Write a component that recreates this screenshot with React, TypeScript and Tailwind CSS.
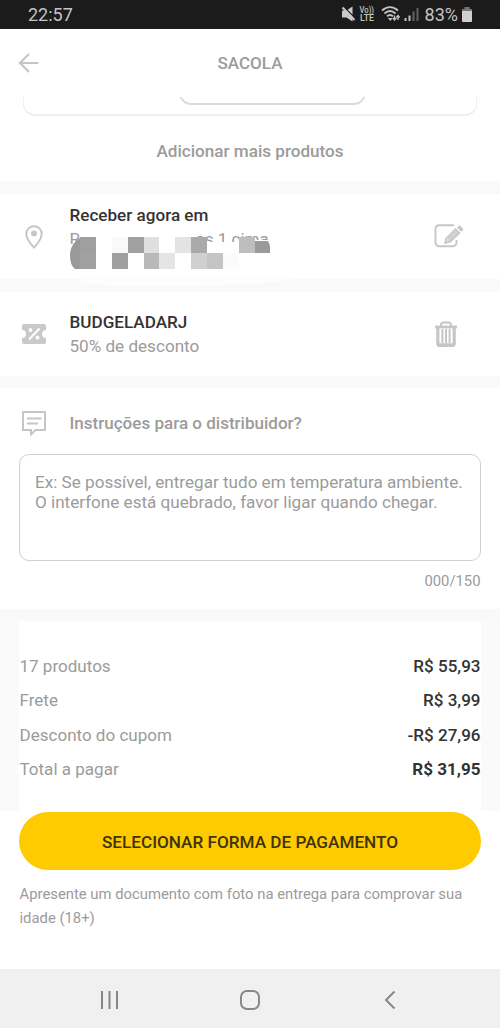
import type { ReactNode } from 'react';

const totals = [
  { label: '17 produtos', value: 'R$ 55,93' },
  { label: 'Frete', value: 'R$ 3,99' },
  { label: 'Desconto do cupom', value: '-R$ 27,96' },
  { label: 'Total a pagar', value: 'R$ 31,95', bold: true },
];

// x, y, width, fill
const mosaic: [number, number, number, string][] = [
  [10, 0, 16, '#9f9f9f'],
  [42, 0, 16, '#f9f9f9'],
  [58, 0, 16, '#a1a1a1'],
  [74, 0, 15, '#dfdfdf'],
  [105, 0, 16, '#e3e3e3'],
  [121, 0, 16, '#aaaaaa'],
  [169, 0, 16, '#bebebe'],
  [10, 16, 16, '#a1a1a1'],
  [42, 16, 16, '#a0a0a0'],
  [74, 16, 15, '#b9b9b9'],
  [89, 16, 16, '#e5e5e5'],
  [121, 16, 16, '#d0d0d0'],
  [137, 16, 16, '#c5c5c5'],
  [153, 16, 16, '#fbfbfb'],
];

const StatusBar = () => (
  <div className="flex h-[29px] shrink-0 items-center bg-[#1b1b1b] pl-7 pr-7 text-[#c4c4c4]">
    <span className="text-[18px] leading-[29px]">22:57</span>
    <svg className="ml-auto h-[29px] w-[82px] shrink-0" viewBox="0 0 82 29" fill="none">
      <path d="M2 10.500h4.500L12.500 6.500v15L6.500 17.500H2z" fill="#c9c9c9" />
      <path d="M3.500 6.500l12 12" stroke="#1b1b1b" strokeWidth="1.300" />
      <path d="M2.500 7.500l12 12.500" stroke="#c9c9c9" strokeWidth="2" />
      <text x="19.500" y="12.500" fontSize="8.500" fontWeight="500" fill="#c4c4c4" textLength="14.500" lengthAdjust="spacingAndGlyphs">Vo))</text>
      <text x="20" y="21" fontSize="9" fontWeight="500" fill="#c4c4c4" textLength="14" lengthAdjust="spacingAndGlyphs">LTE</text>
      <g stroke="#c4c4c4" strokeWidth="1.900">
        <path d="M42 10.500c5-4.500 11-4.500 16 0" />
        <path d="M44.500 13.500c3.500-3.200 7.500-3.200 11 0" />
        <path d="M47 16.300c2-1.700 4-1.700 6 0" />
      </g>
      <path d="M48 18h4.500l-2.200 3z" fill="#c4c4c4" />
      <path d="M54.500 15.500v4.500M52.800 18l1.700 2 1.700-2M58 20v-4.500M56.300 17.500l1.700-2 1.700 2" stroke="#c4c4c4" strokeWidth="1.300" />
      <path d="M65.500 18v3M69.500 15.500V21" stroke="#c4c4c4" strokeWidth="2" />
      <path d="M73.500 11.500V21M77.500 8v13" stroke="#626262" strokeWidth="2" />
    </svg>
    <span className="ml-[3px] text-[18px] leading-[29px]">83%</span>
    <svg className="ml-1 h-[15px] w-[10px] shrink-0" viewBox="0 0 10 15">
      <path d="M2.500 0h5v2H10v3H0V2h2.500z" fill="#777" />
      <path d="M0 4h10v10a1 1 0 0 1-1 1H1a1 1 0 0 1-1-1z" fill="#d0d0d0" />
    </svg>
  </div>
);

const Divider = ({ className = 'h-[12px]' }: { className?: string }) => (
  <div className={`shrink-0 bg-[#f9f9f9] ${className}`} />
);

const Row = ({ icon, action, children }: { icon: ReactNode; action: ReactNode; children: ReactNode }) => (
  <div className="flex h-full items-center pl-5 pr-[36px]">
    <div className="w-[49.500px] shrink-0">{icon}</div>
    <div className="flex-1">{children}</div>
    {action}
  </div>
);

// address line, mostly covered by the mosaic
const HiddenAddress = () => (
  <div className="relative h-[39px] w-[230px]">
    <p className="flex text-[17px] leading-6 text-[#9b9b9b]">
      <span className="w-[126px]">R</span>
      <span>as 1 cima</span>
    </p>
    <svg className="absolute left-0 top-[10px] h-[52px] w-[230px]" viewBox="0 0 230 52">
      <path d="M0 7h10V-1h117v3h10v3h32V3h35v30H0z" fill="#fff" />
      <path d="M11 40h219c-25 7-65 8-110 9-50 1-88 0-109-3z" fill="#fdfdfd" />
      <path d="M10 1C3 5 0 12 0 18c0 7 2 12 5 14h5z" fill="#999" />
      {mosaic.map(([x, y, w, fill]) => (
        <rect key={`${x}-${y}`} x={x} y={y} width={w} height="16" fill={fill} />
      ))}
      <path d="M185 4h13q2 3 2 6v6h-15z" fill="#9a9a9a" />
    </svg>
  </div>
);

const App = () => {
  return (
    <div className="flex h-[1028px] w-[500px] flex-col overflow-hidden bg-white font-['Roboto',sans-serif] text-[#9b9b9b]">
      <StatusBar />

      <header className="grid h-[68px] shrink-0 grid-cols-3 items-center px-[18px]">
        <svg className="h-5 w-[21px]" viewBox="0 0 21 20" fill="none" stroke="#c6c6c6" strokeWidth="2.200">
          <path d="M20.500 10H2M11 1l-9 9 9 9" />
        </svg>
        <h1 className="text-center text-[17px] font-medium leading-6">SACOLA</h1>
      </header>

      <div className="flex h-[84px] shrink-0 flex-col">
        <div className="mx-[23px] h-[19px] rounded-b-[12px] border-x-[1.500px] border-b-2 border-[#efefef] pl-[155px]">
          <div className="h-[8px] w-[187px] overflow-hidden">
            <div className="-mt-4 h-6 w-full rounded-b-[12px] border-2 border-[#dcdcdc]" />
          </div>
        </div>
        <p className="mt-[23px] text-center text-[17.100px] font-medium leading-6">Adicionar mais produtos</p>
      </div>

      <Divider className="h-[13px]" />
      <section className="h-[85px] shrink-0">
        <Row
          icon={
            <svg className="ml-[5px] h-6 w-[18px]" viewBox="0 0 18 24" fill="none">
              <path d="M9 1.200a7.600 7.600 0 0 0-7.700 7.600C1.300 14.500 9 22.500 9 22.500s7.700-8 7.700-13.700A7.600 7.600 0 0 0 9 1.200z" stroke="#c6c6c6" strokeWidth="2" />
              <circle cx="9" cy="8.500" r="3" fill="#c6c6c6" />
            </svg>
          }
          action={
            <svg className="-mt-[2px] h-6 w-[30px]" viewBox="0 0 30 24" fill="none" stroke="#c6c6c6" strokeWidth="1.900">
              <path d="M20 1.200H5a3.500 3.500 0 0 0-3.500 3.500v14A3.500 3.500 0 0 0 5 22.200h14a3.500 3.500 0 0 0 3.500-3.500V16" />
              <path d="M12 14.500L21.500 5l4 4-9.500 9-5 1z" fill="#dcdcdc" strokeWidth="1.500" />
              <path d="M14 15l8.500-8M15.500 16.500l8.500-8" stroke="#bdbdbd" strokeWidth="1" />
              <path d="M23 3.500l2.500-2.300 4 4-2.300 2.500z" fill="#c6c6c6" stroke="none" />
            </svg>
          }
        >
          <div className="-mt-[5px]">
            <p className="text-[17.100px] font-medium leading-6 text-[#333]">Receber agora em</p>
            <HiddenAddress />
          </div>
        </Row>
      </section>

      <Divider className="h-[13px]" />
      <section className="h-[84px] shrink-0">
        <Row
          icon={
            <svg className="ml-[2px] h-5 w-6" viewBox="0 0 24 20">
              <path d="M2 0h20a2 2 0 0 1 2 2v4a4 4 0 0 0 0 8v4a2 2 0 0 1-2 2H2a2 2 0 0 1-2-2v-4a4 4 0 0 0 0-8V2a2 2 0 0 1 2-2z" fill="#c9c9c9" />
              <circle cx="8.500" cy="6" r="1.900" fill="#fff" />
              <circle cx="15.500" cy="13.500" r="1.900" fill="#fff" />
              <path d="M7 15.500l10.500-11" stroke="#fff" strokeWidth="2" />
            </svg>
          }
          action={
            <svg className="mr-[6px] h-[26px] w-[24px]" viewBox="0 0 24 26" fill="none" stroke="#c6c6c6">
              <path d="M1 6h22" strokeWidth="2.800" />
              <path d="M7 6V4a2.500 2.500 0 0 1 2.500-2.500h5A2.500 2.500 0 0 1 17 4v2" strokeWidth="2.200" />
              <path d="M3.800 7v15.500a2 2 0 0 0 2 2h12.400a2 2 0 0 0 2-2V7" strokeWidth="3.200" />
              <path d="M8.400 8v14M12 8v14M15.600 8v14" strokeWidth="2" />
              <path d="M4 23.500h16" strokeWidth="2.500" />
            </svg>
          }
        >
          <p className="text-[17.100px] font-medium leading-6 text-[#333]">BUDGELADARJ</p>
          <p className="text-[17.100px] leading-6">50% de desconto</p>
        </Row>
      </section>

      <Divider />
      <section className="h-[221px] shrink-0 px-[19px] pt-[22px]">
        <div className="flex h-[26px] items-center">
          <svg className="ml-[3px] mr-[23.500px] h-[25px] w-6 shrink-0" viewBox="0 0 24 25" fill="none" stroke="#c6c6c6" strokeWidth="2">
            <path d="M1 1h22v18H13.500l-4.500 4.500V19H1z" />
            <path d="M5 7.500h14.500M5 12.500h11" />
          </svg>
          <span className="text-[17.050px] font-medium leading-6">Instruções para o distribuidor?</span>
        </div>
        <textarea
          className="mt-[18px] block h-[107px] w-[462px] resize-none overflow-hidden rounded-[10px] border-[1.500px] border-[#cfcfcf] px-[15px] py-[17px] text-[17.100px] leading-5 placeholder:text-[#9b9b9b] placeholder:opacity-100"
          placeholder={'Ex: Se possível, entregar tudo em temperatura ambiente.\nO interfone está quebrado, favor ligar quando chegar.'}
        />
        <p className="mt-[10px] pr-[0.500px] text-right text-[14.800px] leading-5">000/150</p>
      </section>

      <Divider />
      <section className="h-[190px] shrink-0 bg-[#fafafa] px-[19px]">
        <dl className="h-full bg-white pl-[0.500px] pr-[0.500px] pt-[28.700px]">
          {totals.map(({ label, value, bold }) => (
            <div key={label} className="flex h-[34.300px] items-center justify-between text-[17.050px]">
              <dt>{label}</dt>
              <dd className={`text-[#333] ${bold ? 'font-bold' : 'font-medium'}`}>{value}</dd>
            </div>
          ))}
        </dl>
      </section>

      <footer className="flex-1 px-[19px] pt-px">
        <button className="h-[58px] w-[462px] rounded-full bg-[#fecb00] pt-[3px] text-[17.150px] font-medium text-[#40330a]">
          SELECIONAR FORMA DE PAGAMENTO
        </button>
        <p className="mt-[12px] pl-[0.500px] text-[14.830px] leading-6">
          Apresente um documento com foto na entrega para comprovar sua idade (18+)
        </p>
      </footer>

      <nav className="flex h-[59px] shrink-0 items-center justify-between bg-[#f0f0f0] pl-[100px] pr-[104px] pt-[3px]">
        <svg className="h-5 w-5" viewBox="0 0 20 20" stroke="#888" strokeWidth="2">
          <path d="M2 1v18M9.500 1v18M17 1v18" />
        </svg>
        <svg className="mr-[5px] h-5 w-5" viewBox="0 0 20 20" fill="none" stroke="#888" strokeWidth="2">
          <rect x="1" y="1" width="18" height="18" rx="6" />
        </svg>
        <svg className="h-5 w-3" viewBox="0 0 12 20" fill="none" stroke="#888" strokeWidth="2">
          <path d="M10.500 1.500L2 10l8.500 8.500" />
        </svg>
      </nav>
    </div>
  );
};

export default App;
